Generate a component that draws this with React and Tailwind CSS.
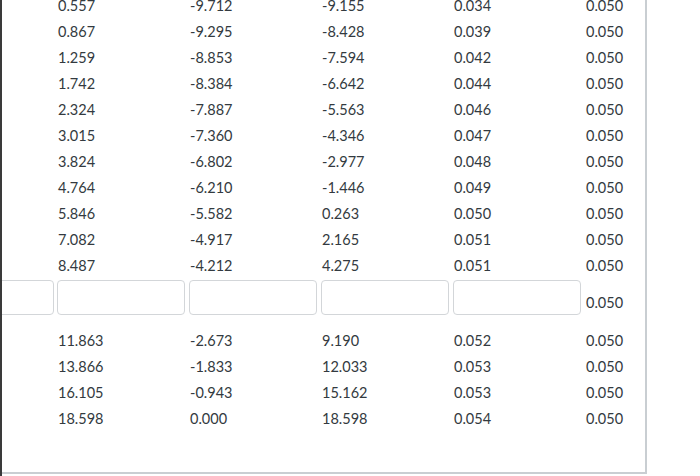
const top = [
  ['0.557', '-9.712', '-9.155', '0.034', '0.050'],
  ['0.867', '-9.295', '-8.428', '0.039', '0.050'],
  ['1.259', '-8.853', '-7.594', '0.042', '0.050'],
  ['1.742', '-8.384', '-6.642', '0.044', '0.050'],
  ['2.324', '-7.887', '-5.563', '0.046', '0.050'],
  ['3.015', '-7.360', '-4.346', '0.047', '0.050'],
  ['3.824', '-6.802', '-2.977', '0.048', '0.050'],
  ['4.764', '-6.210', '-1.446', '0.049', '0.050'],
  ['5.846', '-5.582', '0.263', '0.050', '0.050'],
  ['7.082', '-4.917', '2.165', '0.051', '0.050'],
  ['8.487', '-4.212', '4.275', '0.051', '0.050'],
];

const bottom = [
  ['11.863', '-2.673', '9.190', '0.052', '0.050'],
  ['13.866', '-1.833', '12.033', '0.053', '0.050'],
  ['16.105', '-0.943', '15.162', '0.053', '0.050'],
  ['18.598', '0.000', '18.598', '0.054', '0.050'],
];

const grid = 'grid grid-cols-[56px_132px_132px_132px_132px_1fr]';

function Row({ cells }) {
  return (
    <div className={`${grid} h-[26px] items-center`}>
      <div />
      {cells.map((c, i) => (
        <div key={i} className="leading-[26px]">{c}</div>
      ))}
    </div>
  );
}

function Box({ className = '' }) {
  return (
    <input
      type="text"
      readOnly
      className={`h-[35px] rounded border border-[#d3d6d9] bg-white ${className}`}
    />
  );
}

export default function App() {
  return (
    <div
      className="flex h-[476px] w-[700px] bg-white text-[14.5px] text-[#333a40]"
      style={{ fontFamily: 'Lato, "Open Sans", sans-serif' }}
    >
      <div className="w-[2px] shrink-0 bg-[#3a3a3a]" />
      <div className="h-[474px] w-[645px] shrink-0 overflow-hidden border-r-2 border-b-2 border-[#c9ced2]">
        <div className="-mt-[7px]">
          {top.map((r, i) => (
            <Row key={i} cells={r} />
          ))}
          <div className={`${grid} h-[49px] items-start`}>
            <div className="pt-px">
              <Box className="-ml-[80px] w-[132px]" />
            </div>
            {[0, 1, 2, 3].map((i) => (
              <div key={i} className="pt-px">
                <Box className="-ml-px w-[128px]" />
              </div>
            ))}
            <div className="pt-[11px] leading-[26px]">0.050</div>
          </div>
          {bottom.map((r, i) => (
            <Row key={i} cells={r} />
          ))}
        </div>
      </div>
    </div>
  );
}
